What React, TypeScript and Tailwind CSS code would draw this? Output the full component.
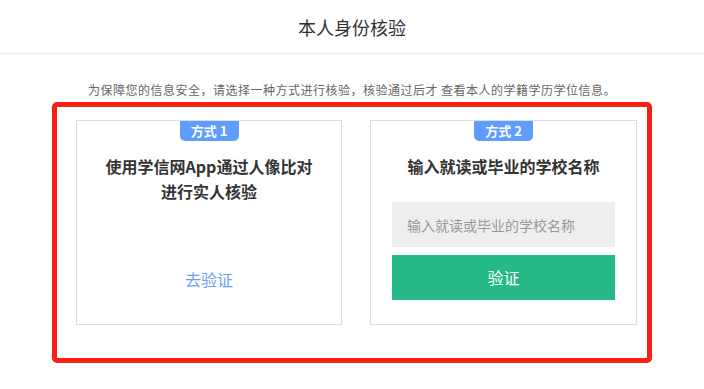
import React from "react";

const font = { fontFamily: '"Noto Sans CJK SC", "Noto Sans", sans-serif' };

function Badge({ label }: { label: string }) {
  return (
    <div className="flex justify-center">
      <div className="w-[59px] h-[20px] bg-[#5e9dfd] rounded-b-[5px] text-white text-[13px] font-bold leading-[20px] text-center">
        {label}
      </div>
    </div>
  );
}

export default function App() {
  return (
    <div className="w-[704px] h-[389px] bg-white text-[#333]" style={font}>
      {/* Header */}
      <div className="h-[54px] flex items-center justify-center border-b border-[#eeeeee]">
        <h1 className="text-[18px] leading-[24px] text-[#333] font-normal">本人身份核验</h1>
      </div>

      {/* Tip */}
      <p className="mt-[27px] text-center text-[12px] leading-[18px] tracking-[0.5px] text-[#666]">
        为保障您的信息安全，请选择一种方式进行核验，核验通过后才 查看本人的学籍学历学位信息。
      </p>

      {/* Highlight box */}
      <div className="mx-auto mt-[3px] w-[600px] h-[261px] border-[5px] border-[#fa1f14] rounded-[5px] pl-[19px] pt-[14px] flex gap-[28px]">
        {/* Method 1 */}
        <div className="w-[266px] h-[205px] border border-[#dddddd] -mt-px">
          <Badge label="方式 1" />
          <div className="mt-[13px] text-center text-[16px] leading-[25px] font-bold text-[#333]">
            使用学信网App通过人像比对
            <br />
            进行实人核验
          </div>
          <div className="mt-[63px] text-center text-[16px] leading-[24px] text-[#6f9ef8] cursor-pointer">
            去验证
          </div>
        </div>

        {/* Method 2 */}
        <div className="w-[267px] h-[205px] border border-[#dddddd] -mt-px px-[21px]">
          <Badge label="方式 2" />
          <div className="mt-[13px] text-center text-[16px] leading-[25px] font-bold text-[#333]">
            输入就读或毕业的学校名称
          </div>
          <input
            className="mt-[23px] w-full h-[45px] bg-[#eeeeee] px-[15px] text-[14px] text-[#333] placeholder:text-[#999] outline-none"
            placeholder="输入就读或毕业的学校名称"
          />
          <button className="mt-[8px] w-full h-[45px] bg-[#24b986] text-white text-[16px] leading-[45px]">
            验证
          </button>
        </div>
      </div>
    </div>
  );
}
